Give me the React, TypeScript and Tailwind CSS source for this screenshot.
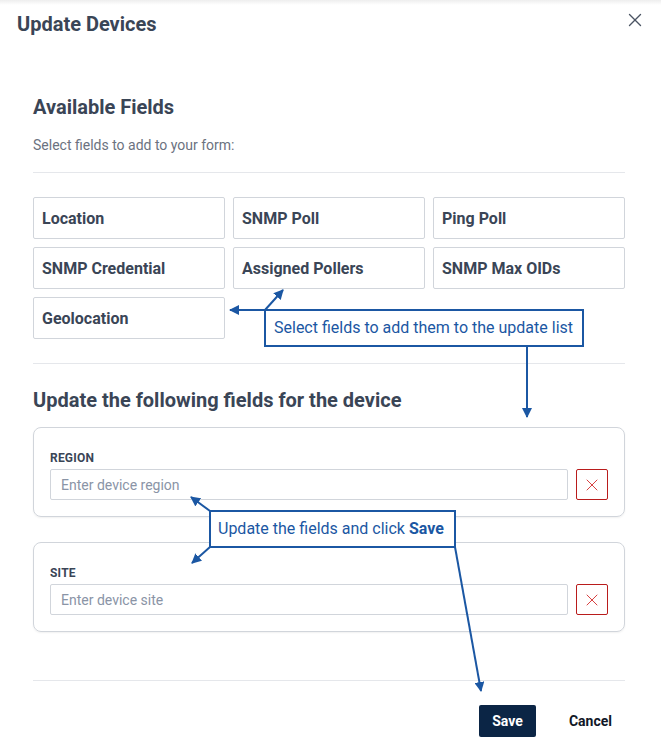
import { X } from "lucide-react";

const fields = [
  "Location",
  "SNMP Poll",
  "Ping Poll",
  "SNMP Credential",
  "Assigned Pollers",
  "SNMP Max OIDs",
  "Geolocation",
];

const updates = [
  { label: "REGION", placeholder: "Enter device region" },
  { label: "SITE", placeholder: "Enter device site" },
];

const BLUE = "#1b57a3";

function Arrows() {
  return (
    <svg
      className="absolute left-0 top-0 pointer-events-none"
      width={661}
      height={746}
      viewBox="0 0 661 746"
    >
      <defs>
        <marker
          id="head"
          viewBox="0 0 10 10"
          refX="9"
          refY="5"
          markerWidth="5"
          markerHeight="5"
          orient="auto-start-reverse"
        >
          <path d="M0 0 L10 5 L0 10 z" fill={BLUE} />
        </marker>
      </defs>
      <g stroke={BLUE} strokeWidth={2} fill="none">
        <line x1={265} y1={310} x2={230} y2={310} markerEnd="url(#head)" />
        <line x1={265} y1={310} x2={283} y2={290} markerEnd="url(#head)" />
        <line x1={527} y1={346} x2={527} y2={417} markerEnd="url(#head)" />
        <line x1={210} y1={511} x2={191} y2={497} markerEnd="url(#head)" />
        <line x1={210} y1={547} x2={192} y2={563} markerEnd="url(#head)" />
        <line x1={455} y1={547} x2={481} y2={691} markerEnd="url(#head)" />
      </g>
    </svg>
  );
}

export default function App() {
  return (
    <div
      className="relative w-[661px] h-[746px] bg-white overflow-hidden text-[#3a4556]"
      style={{ fontFamily: "Roboto, 'Liberation Sans', sans-serif" }}
    >
      <div className="absolute left-0 top-0 w-full h-[5px] bg-gradient-to-b from-[#eeeeee] to-white" />

      <div className="flex items-start justify-between pl-[17px] pr-[15px] pt-[10px]">
        <h2 className="text-[20px] leading-[28px] font-bold">Update Devices</h2>
        <X className="-mt-[1px] w-[22px] h-[22px] text-[#4b5563]" strokeWidth={1.5} />
      </div>

      <div className="pl-[33px] pr-[36px]">
        <h3 className="mt-[55px] text-[20px] leading-[28px] font-bold">Available Fields</h3>
        <p className="mt-[14px] text-[14px] leading-[20px] text-[#6b7280]">
          Select fields to add to your form:
        </p>
        <div className="mt-[17px] border-t border-[#e5e7eb]" />

        <div className="mt-[24px] grid grid-cols-3 gap-[8px]">
          {fields.map((f) => (
            <div
              key={f}
              className="h-[42px] flex items-center pl-[8px] pt-[2px] border border-[#d1d5db] rounded-[2px] text-[16px] font-bold"
            >
              {f}
            </div>
          ))}
        </div>

        <div className="mt-[24px] border-t border-[#e5e7eb]" />
        <h3 className="mt-[22px] text-[20px] leading-[28px] font-bold">
          Update the following fields for the device
        </h3>

        <div className="mt-[13px] flex flex-col gap-[25px]">
          {updates.map((u) => (
            <div
              key={u.label}
              className="h-[90px] border border-[#d1d5db] rounded-[8px] shadow-[0_1px_2px_rgba(0,0,0,0.06)] px-[16px] pt-[22px]"
            >
              <div className="text-[12px] leading-[16px] font-bold tracking-[0.2px] text-[#3a4556]">
                {u.label}
              </div>
              <div className="mt-[3px] flex gap-[8px]">
                <input
                  placeholder={u.placeholder}
                  className="flex-1 h-[31px] border border-[#d1d5db] rounded-[2px] pl-[10px] text-[14px] outline-none placeholder:text-[#8a94a6]"
                />
                <button className="w-[32px] h-[31px] flex items-center justify-center border border-[#b91c1c] rounded-[2px]">
                  <X className="w-[20px] h-[20px] text-[#d32f2f]" strokeWidth={1.1} />
                </button>
              </div>
            </div>
          ))}
        </div>

        <div className="mt-[48px] border-t border-[#e5e7eb]" />
        <div className="mt-[24px] flex justify-end items-center gap-[20px]">
          <button className="w-[57px] h-[32px] bg-[#0b2545] text-white text-[14px] font-bold rounded-[2px]">
            Save
          </button>
          <button className="h-[32px] pl-[13px] pr-[13px] text-[14px] font-bold text-[#111827]">
            Cancel
          </button>
        </div>
      </div>

      <Arrows />

      <div
        className="absolute left-[264px] top-[309px] w-[320px] h-[38px] border-2 bg-white flex items-center pl-[8px] text-[16px]"
        style={{ borderColor: BLUE, color: BLUE }}
      >
        Select fields to add them to the update list
      </div>
      <div
        className="absolute left-[209px] top-[510px] w-[247px] h-[38px] border-2 bg-white flex items-center pl-[7px] text-[16px]"
        style={{ borderColor: BLUE, color: BLUE }}
      >
        Update the fields and click&nbsp;<span className="font-bold">Save</span>
      </div>
    </div>
  );
}
